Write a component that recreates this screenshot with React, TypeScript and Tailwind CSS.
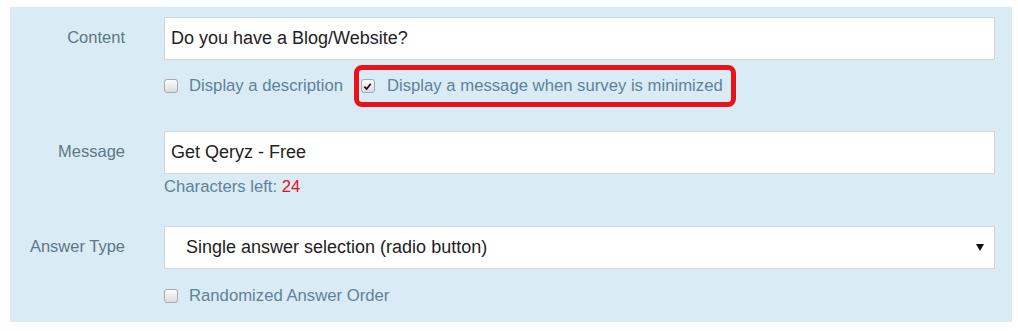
import React, { useState } from 'react';

const Check = ({ checked }: { checked?: boolean }) => (
  <span className="flex h-[14px] w-[14px] shrink-0 items-center justify-center rounded-[3px] border border-[#a9a9a9] bg-gradient-to-b from-[#fcfcfc] to-[#dcdcdc]">
    {checked && (
      <svg viewBox="0 0 10 10" className="h-[9px] w-[9px]">
        <path d="M1.5 5.2 L4 7.8 L8.6 2" fill="none" stroke="#111" strokeWidth="1.9" />
      </svg>
    )}
  </span>
);

const Label = ({ children }: { children: React.ReactNode }) => (
  <div className="w-[115px] shrink-0 pt-[10px] text-right text-[16.5px] leading-[20px] text-[#5d7786]">{children}</div>
);

export default function App() {
  const [content, setContent] = useState('Do you have a Blog/Website?');
  const [message, setMessage] = useState('Get Qeryz - Free');

  return (
    <div className="min-h-[331px] bg-white pt-[7px] pl-[10px] pr-[6px] font-['Liberation_Sans',Arial,sans-serif]">
      <div className="bg-[#d9ebf5] pt-[10px] pb-[16px] pr-[17px]">
        <div className="flex gap-[39px]">
          <Label>Content</Label>
          <div className="flex-1">
            <input
              value={content}
              onChange={e => setContent(e.target.value)}
              className="block h-[43px] w-full border border-[#d3d6d8] bg-white px-[6px] text-[18px] text-[#222] outline-none"
            />
            <div className="mt-[5px] flex h-[42px] items-center text-[16.7px] text-[#5f8297]">
              <label className="flex items-center gap-[11px]">
                <Check />
                Display a description
              </label>
              <label className="ml-[11px] flex h-[42px] items-center gap-[12px] rounded-[8px] border-[5px] border-[#e8121b] pl-[2px] pr-[8px]">
                <Check checked />
                Display a message when survey is minimized
              </label>
            </div>
          </div>
        </div>

        <div className="mt-[24px] flex gap-[39px]">
          <Label>Message</Label>
          <div className="flex-1">
            <input
              value={message}
              onChange={e => setMessage(e.target.value)}
              className="block h-[43px] w-full border border-[#d3d6d8] bg-white px-[6px] text-[18px] text-[#222] outline-none"
            />
            <div className="mt-[3px] text-[16.7px] leading-[20px] text-[#5f8297]">
              Characters left: <span className="text-[#e8121b]">24</span>
            </div>
          </div>
        </div>

        <div className="mt-[29px] flex gap-[39px]">
          <Label>Answer Type</Label>
          <div className="flex-1">
            <div className="flex h-[43px] w-full items-center justify-between border border-[#d3d6d8] bg-white pl-[21px] pr-[10px] text-[18px] text-[#222]">
              <span>Single answer selection (radio button)</span>
              <svg viewBox="0 0 8 7" className="h-[7px] w-[8px]">
                <path d="M0 0 H8 L4 7 Z" fill="#111" />
              </svg>
            </div>
            <label className="mt-[17px] flex h-[20px] items-center gap-[11px] text-[16.7px] text-[#5f8297]">
              <Check />
              Randomized Answer Order
            </label>
          </div>
        </div>
      </div>
    </div>
  );
}
